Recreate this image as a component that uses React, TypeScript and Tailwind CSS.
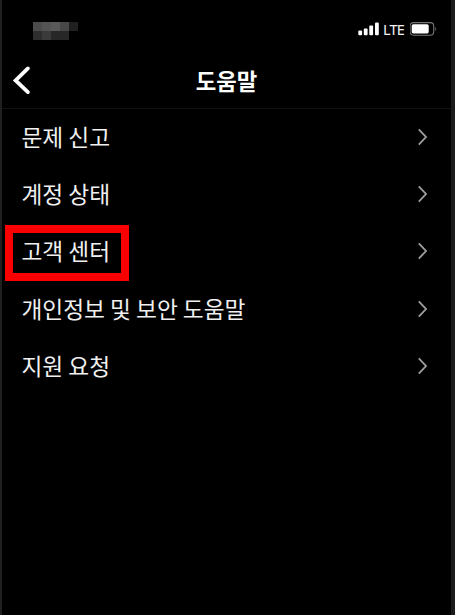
const menuItems = [
  { label: "문제 신고" },
  { label: "계정 상태" },
  { label: "고객 센터", highlighted: true },
  { label: "개인정보 및 보안 도움말" },
  { label: "지원 요청" },
];

function StatusBar() {
  return (
    <div className="flex h-[57px] items-start justify-between pt-[21px] pl-[31px] pr-[13px]">
      {/* pixelated clock */}
      <svg width="46" height="20" viewBox="0 0 46 20" shapeRendering="crispEdges">
        <rect x="0" y="1" width="9" height="9" fill="#4c4c4c" />
        <rect x="9" y="1" width="9" height="9" fill="#535353" />
        <rect x="18" y="1" width="9" height="9" fill="#5a5a5a" />
        <rect x="27" y="1" width="9" height="9" fill="#484848" />
        <rect x="36" y="1" width="9" height="9" fill="#202020" />
        <rect x="0" y="10" width="9" height="9" fill="#2e2e2e" />
        <rect x="9" y="10" width="9" height="9" fill="#3b3b3b" />
        <rect x="18" y="10" width="18" height="9" fill="#272727" />
      </svg>
      <div className="flex items-start">
        <svg width="22" height="16" viewBox="0 0 22 16" fill="#fff">
          <rect x="0.3" y="9.5" width="3.8" height="4.7" rx="1" />
          <rect x="5.8" y="7.5" width="3.8" height="6.7" rx="1" />
          <rect x="11.3" y="4.5" width="3.8" height="9.7" rx="1" />
          <rect x="17" y="1.5" width="3.8" height="12.7" rx="1" />
        </svg>
        <span className="ml-[3px] w-[23px] text-[14.5px] leading-[16px] tracking-[-0.8px] text-[#f2f2f2] font-['Noto_Sans',sans-serif]">
          LTE
        </span>
        <svg className="ml-[4px]" width="28" height="16" viewBox="0 0 28 16">
          <rect x="0" y="1.6" width="23.7" height="12.6" rx="3.4" fill="none" stroke="#777" strokeWidth="1.1" />
          <rect x="1.7" y="3.2" width="17" height="9.2" rx="1.6" fill="#fff" />
          <path d="M25.3 6v4c1.2-.7 1.2-3.3 0-4z" fill="#777" />
        </svg>
      </div>
    </div>
  );
}

export default function App() {
  return (
    <div className="h-screen w-full overflow-hidden border-l-2 border-r-4 border-l-[#202020] border-r-[#1b1b1b] bg-black text-[#f0f0f0] font-['Noto_Sans_CJK_KR',sans-serif]">
      <StatusBar />

      <header className="grid h-[52px] grid-cols-[40px_1fr_40px] items-center border-b border-[#111] pb-[5px]">
        <button className="h-[30px] pl-[10px]">
          <svg width="20" height="30" viewBox="0 0 20 30" fill="none" stroke="#fff" strokeWidth="3.8" strokeLinecap="round">
            <path d="M15.9 3.4L3.6 15.4l12.3 11.7" />
          </svg>
        </button>
        <h1 className="text-center text-[22.3px] leading-[30px] font-bold text-white">도움말</h1>
      </header>

      <ul>
        {menuItems.map((item) => (
          <li key={item.label} className="relative flex h-[57.3px] items-center justify-between pb-[1.5px] pl-[19.5px] pr-[22px]">
            <span className="text-[22.7px] leading-[30px]">{item.label}</span>
            <svg width="12" height="20" viewBox="0 0 12 20" fill="none" stroke="#a0a0a0" strokeWidth="1.8">
              <path d="M1.8 2.4l7.2 7.6-7.2 7.6" />
            </svg>
            {item.highlighted && (
              <div className="absolute top-[1px] left-[3px] h-[56px] w-[124px] border-8 border-[#fb0000]" />
            )}
          </li>
        ))}
      </ul>
    </div>
  );
}
